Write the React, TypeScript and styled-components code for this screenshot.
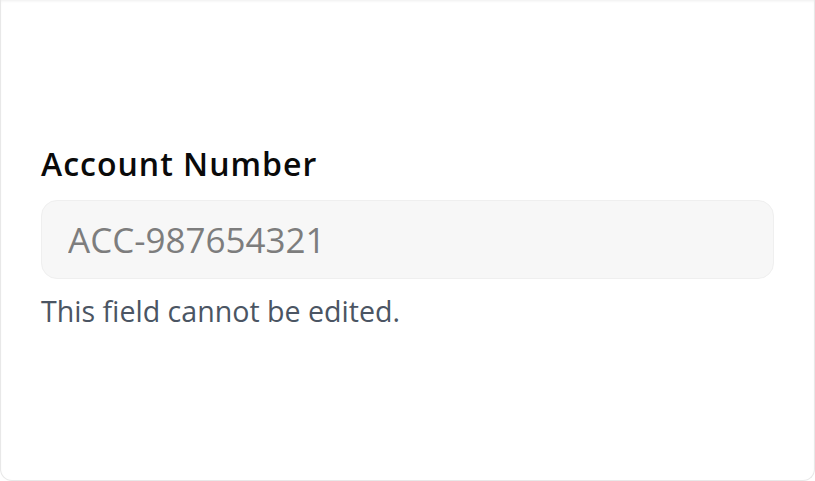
import React from 'react';
import styled, { createGlobalStyle } from 'styled-components';

const GlobalStyle = createGlobalStyle`
  html, body {
    margin: 0;
    padding: 0;
    background: #ffffff;
  }
  body {
    font-family: 'Open Sans', 'Liberation Sans', sans-serif;
  }
`;

const Card = styled.div`
  box-sizing: border-box;
  width: 815px;
  height: 481px;
  border: 1px solid #e8e8e8;
  border-top: none;
  border-radius: 0 0 12px 12px;
  background: #ffffff;
  box-shadow: inset 0 2px 3px -1px rgba(0, 0, 0, 0.07);
  display: flex;
  flex-direction: column;
  justify-content: center;
  padding: 0 40px 6px;
`;

const Field = styled.div`
  display: flex;
  flex-direction: column;
`;

const Label = styled.label`
  font-size: 32px;
  font-weight: 600;
  color: #0a0a0a;
  line-height: 40px;
  margin-bottom: 16px;
  letter-spacing: 1px;
`;

const Input = styled.input`
  box-sizing: border-box;
  width: 100%;
  height: 79px;
  border: 1px solid #efefef;
  border-radius: 16px;
  background: #f7f7f7;
  padding: 0 26px;
  font-family: inherit;
  font-size: 35px;
  color: #7d7d7d;
  outline: none;
  -webkit-text-fill-color: #7d7d7d;
  opacity: 1;
`;

const Help = styled.p`
  margin: 12px 0 0;
  font-size: 28.6px;
  line-height: 40px;
  color: #4b5563;
`;

export default function App() {
  return (
    <>
      <GlobalStyle />
      <Card>
        <Field>
          <Label htmlFor="acc">Account Number</Label>
          <Input id="acc" value="ACC-987654321" disabled readOnly />
          <Help>This field cannot be edited.</Help>
        </Field>
      </Card>
    </>
  );
}
